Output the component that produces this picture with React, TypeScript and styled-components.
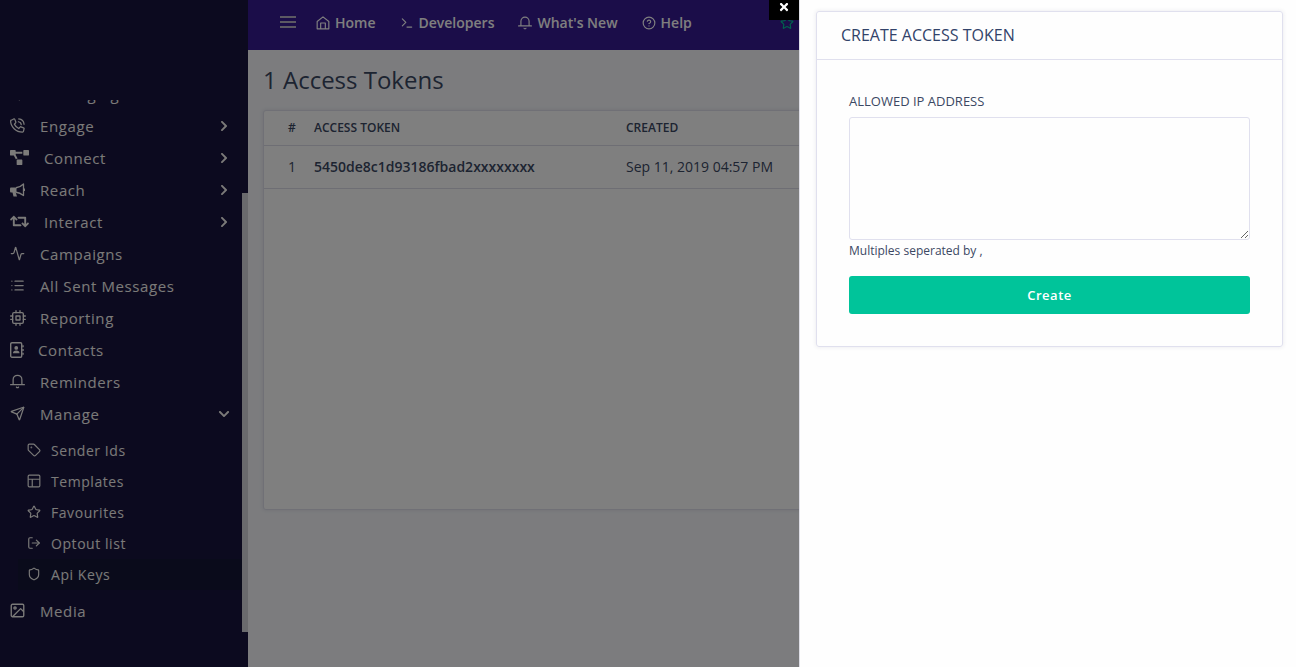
import React from "react";
import styled, { createGlobalStyle, css } from "styled-components";
import {
  Activity, CircleHelp, List, LogOut, Send, Shield, Star, Tag, Terminal,
} from "lucide-react";
import { FaChevronDown, FaChevronRight, FaProjectDiagram, FaRetweet, FaTimes } from "react-icons/fa";

const GlobalStyle = createGlobalStyle`
  *, *::before, *::after { box-sizing: border-box; }
  body {
    margin: 0;
    background: #f8f9fd;
    color: #3b4863;
    font-family: "Open Sans", sans-serif;
    font-size: 14px;
    overflow: hidden;
  }
  a { color: inherit; text-decoration: none; }
  button { font-family: inherit; cursor: pointer; }
`;

const Page = styled.div`
  display: flex;
  min-height: 100vh;
`;

const Sidebar = styled.aside`
  position: relative;
  flex: 0 0 248px;
  height: 100vh;
  padding: 100px 6px 0 0;
  background: #19143e;
`;

const SidebarView = styled.nav`
  height: 100%;
  overflow: hidden;
`;

const Menu = styled.ul`
  margin: -22px 0 0;
  padding: 0;
  list-style: none;
`;

const ScrollThumb = styled.span`
  position: absolute;
  right: 0;
  top: 193px;
  width: 6px;
  height: 439px;
  background: #d4d4da;
`;

const MenuLink = styled.a`
  display: flex;
  align-items: center;
  height: 32px;
  padding: 0 12px 0 10px;
  color: #f6f5f2;
  font-size: 15px;
  letter-spacing: 0.04em;
`;

const MenuIcon = styled.span<{ $space: number }>`
  display: flex;
  flex: none;
  width: ${({ $space }) => $space}px;
  padding-bottom: 1px;
`;

const Caret = styled.span`
  display: flex;
  margin-left: auto;
  padding-bottom: 1px;
`;

const SubMenu = styled.ul`
  margin: 0;
  padding: 5px 0 5px 18px;
  list-style: none;
`;

const SubLink = styled.a<{ $active?: boolean }>`
  display: flex;
  align-items: center;
  gap: 10px;
  height: 31px;
  padding-left: 9px;
  color: #f6f5f2;
  font-size: 14px;
  letter-spacing: 0.04em;
  ${({ $active }) => $active && css`background: #141736;`}
  svg { margin-bottom: 2px; }
`;

const Main = styled.main`
  flex: 1;
  min-width: 0;
`;

const TopBar = styled.header`
  display: flex;
  align-items: center;
  height: 50px;
  padding: 0 32px 6px;
  background: #361a92;
  color: #fff;
`;

const MenuToggle = styled.button`
  display: flex;
  margin-right: 20px;
  padding: 0;
  border: 0;
  background: none;
  color: #b9b3c6;
`;

const TopNav = styled.nav`
  display: flex;
  gap: 24px;
`;

const TopLink = styled.a`
  display: flex;
  align-items: center;
  gap: 5px;
  font-weight: 600;
  white-space: nowrap;
  svg { margin-top: 2px; }
`;

const Credits = styled(TopLink)`
  margin-left: 88px;
  color: #00c49a;
`;

const Content = styled.div`
  padding: 12px 15px;
`;

const Heading = styled.h1`
  margin: 0 0 12px;
  font-size: 24px;
  font-weight: 400;
  line-height: 36px;
`;

const TableCard = styled.section`
  min-height: 400px;
  border: 1px solid #e0e0ec;
  border-radius: 3px;
  background: #fff;
  box-shadow: 0 0 4px rgba(40, 40, 80, 0.12);
`;

const TokenTable = styled.table`
  width: 100%;
  border-spacing: 0;
  table-layout: fixed;
  text-align: left;
  th, td {
    padding: 0 12px 2px;
    border-bottom: 1px solid #dcdce8;
  }
  th { height: 35px; font-size: 12px; font-weight: 600; }
  td { height: 43px; font-size: 14px; }
  td strong { font-weight: 600; }
  th:first-child, td:first-child { width: 38px; padding: 0 0 2px 24px; }
  th:nth-child(2) { width: 312px; }
`;

const Backdrop = styled.div`
  position: fixed;
  inset: 0;
  background: rgba(0, 0, 0, 0.5);
`;

const Drawer = styled.aside`
  position: fixed;
  top: 0;
  right: 0;
  bottom: 0;
  width: 497px;
  padding: 11px 13px 0 17px;
  background: #fefefe;
  box-shadow: inset 1px 0 #dedee6;
`;

const CloseButton = styled.button`
  position: absolute;
  top: 0;
  right: 100%;
  display: flex;
  justify-content: center;
  width: 30px;
  height: 20px;
  padding: 1px 0 0;
  border: 0;
  background: #000;
  color: #fff;
`;

const FormCard = styled.form`
  border: 1px solid #e0e0ee;
  border-radius: 3px;
  box-shadow: 0 0 4px rgba(40, 40, 80, 0.1);
`;

const FormTitle = styled.h2`
  margin: 0;
  padding: 0 24px;
  border-bottom: 1px solid #e0e0ee;
  color: #32436a;
  font-size: 16px;
  font-weight: 400;
  line-height: 47px;
`;

const FormBody = styled.div`
  display: flex;
  flex-direction: column;
  padding: 32px;
`;

const Label = styled.label`
  margin-bottom: 6px;
  font-size: 13px;
  line-height: 19px;
`;

const TextBox = styled.textarea`
  width: 100%;
  height: 123px;
  padding: 8px;
  border: 1px solid #e0e0ee;
  border-radius: 3px;
  background: #fefefe;
  font: inherit;
  resize: vertical;
`;

const Hint = styled.small`
  margin-bottom: 14px;
  font-size: 12px;
  line-height: 22px;
`;

const Submit = styled.button`
  height: 38px;
  border: 0;
  border-radius: 3px;
  background: #00c49a;
  color: #fff;
  font-size: 13px;
  font-weight: 600;
  letter-spacing: 0.04em;
`;

const PhoneIcon = () => (
  <svg width="15" height="15" viewBox="0 0 24 24" fill="none" stroke="currentColor" strokeWidth="2" strokeLinejoin="round" strokeLinecap="round">
    <path d="M2 3.5 6 1.5c.8-.3 1.400 0 1.700.7l1.600 4.200c.2.600.1 1-.4 1.500L7 9.800c1.400 3 4 5.600 7 7l2-2.300c.4-.5.900-.6 1.500-.4l4.200 1.800c.8.300 1 .9.800 1.600l-1 4c-.2.800-.7 1-1.400 1C9.500 22.500 1 14 1 4.900c0-.7.300-1.100 1-1.400z" />
    <path d="M13.500 6c2.500.4 4.200 2 4.500 4.500M14 1.500c5 .5 8 3.600 8.500 8.500" />
  </svg>
);

const HornIcon = () => (
  <svg width="15" height="14" viewBox="0 0 30 28" fill="none" stroke="currentColor" strokeWidth="2.600" strokeLinejoin="round">
    <path d="M2 9h11v10h-1.500l2.500 8H7l-2-8H2c-3 0-3-10 0-10z" fill="currentColor" stroke="none" />
    <path d="M12 9.500C18 9 22 7 27 2v23c-5-4-9-6-15-6.500" />
    <path d="M29 11v5" />
  </svg>
);

const AddressBookIcon = () => (
  <svg width="14" height="16" viewBox="0 0 28 32" fill="none" stroke="currentColor" strokeWidth="2.800">
    <rect x="1.400" y="1.400" width="22" height="29" rx="2.500" />
    <circle cx="12.500" cy="11.800" r="3.800" fill="currentColor" stroke="none" />
    <path d="M6 22.500c0-4 2-5.500 6.500-5.500s6.500 1.500 6.500 5.500z" fill="currentColor" stroke="none" />
    <path d="M26 6.500v4M26 14v4M26 21.500v4" />
  </svg>
);

const BarsIcon = () => (
  <svg width="16" height="12" viewBox="0 0 16 12" fill="currentColor">
    <path d="M0 0h16v2H0zM0 5h16v2H0zM0 10h16v2H0z" />
  </svg>
);

const LayoutIcon = () => (
  <svg width="14" height="14" viewBox="0 0 24 24" fill="none" stroke="currentColor" strokeWidth="2">
    <rect x="2" y="2" width="20" height="20" rx="2" />
    <path d="M2 9h20M9 9v13" />
  </svg>
);

const CpuIcon = () => (
  <svg width="16" height="16" viewBox="0 0 24 24" fill="none" stroke="currentColor" strokeWidth="2" strokeLinecap="round" strokeLinejoin="round">
    <rect x="4" y="4" width="16" height="16" rx="2" />
    <path d="M9 9h6v6H9zM9 1v3M15 1v3M9 20v3M15 20v3M20 9h3M20 14h3M1 9h3M1 14h3" />
  </svg>
);

const PictureIcon = () => (
  <svg width="15" height="15" viewBox="0 0 24 24" fill="none" stroke="currentColor" strokeWidth="2.200" strokeLinejoin="round">
    <rect x="2" y="2" width="20" height="20" rx="2" />
    <circle cx="8" cy="8" r="1.800" />
    <path d="M22 14l-5-5L4 22" />
  </svg>
);

const BellIcon = ({ size }: { size: number }) => (
  <svg width={size} height={size} viewBox="0 0 24 24" fill="none" stroke="currentColor" strokeWidth="2" strokeLinecap="round" strokeLinejoin="round">
    <path d="M19 17V9A7 7 0 0 0 5 9v8M1 17h22M10.300 21a2 2 0 0 0 3.400 0" />
  </svg>
);

const HomeIcon = () => (
  <svg width="14" height="14" viewBox="0 0 24 24" fill="none" stroke="currentColor" strokeWidth="2" strokeLinecap="round" strokeLinejoin="round">
    <path d="M2 9.500 12 1.500l10 8V22H2zM8 22V12h8v10" />
  </svg>
);

const line = { size: 15, strokeWidth: 2 };
const small = { size: 14, strokeWidth: 2 };

type Item = { label: string; icon: React.ReactNode; space?: number; caret?: "right" | "down" };

const items: Item[] = [
  { label: "Messaging", icon: <Send {...line} />, caret: "right" },
  { label: "Engage", icon: <PhoneIcon />, caret: "right" },
  { label: "Connect", icon: <FaProjectDiagram size={19} />, space: 34, caret: "right" },
  { label: "Reach", icon: <HornIcon />, caret: "right" },
  { label: "Interact", icon: <FaRetweet size={19} />, space: 34, caret: "right" },
  { label: "Campaigns", icon: <Activity {...line} /> },
  { label: "All Sent Messages", icon: <List {...line} /> },
  { label: "Reporting", icon: <CpuIcon /> },
  { label: "Contacts", icon: <AddressBookIcon />, space: 28 },
  { label: "Reminders", icon: <BellIcon size={15} /> },
  { label: "Manage", icon: <Send {...line} />, caret: "down" },
];

const subItems = [
  { label: "Sender Ids", icon: <Tag {...small} /> },
  { label: "Templates", icon: <LayoutIcon /> },
  { label: "Favourites", icon: <Star {...small} /> },
  { label: "Optout list", icon: <LogOut {...small} /> },
  { label: "Api Keys", icon: <Shield {...small} />, active: true },
];

const MenuItem = ({ label, icon, space = 30, caret }: Item) => (
  <MenuLink href="#">
    <MenuIcon $space={space}>{icon}</MenuIcon>
    {label}
    {caret && <Caret>{caret === "right" ? <FaChevronRight size={12} /> : <FaChevronDown size={12} />}</Caret>}
  </MenuLink>
);

export default function App() {
  return (
    <>
      <GlobalStyle />
      <Page>
        <Sidebar>
          <SidebarView aria-label="Main">
            <Menu>
              {items.map((item) => (
                <li key={item.label}>
                  <MenuItem {...item} />
                  {item.caret === "down" && (
                    <SubMenu>
                      {subItems.map((sub) => (
                        <li key={sub.label}>
                          <SubLink href="#" $active={sub.active}>{sub.icon}{sub.label}</SubLink>
                        </li>
                      ))}
                    </SubMenu>
                  )}
                </li>
              ))}
              <li><MenuItem label="Media" icon={<PictureIcon />} /></li>
            </Menu>
          </SidebarView>
          <ScrollThumb />
        </Sidebar>
        <Main>
          <TopBar>
            <MenuToggle type="button" aria-label="Toggle menu"><BarsIcon /></MenuToggle>
            <TopNav aria-label="Top">
              <TopLink href="#"><HomeIcon />Home</TopLink>
              <TopLink href="#"><Terminal {...small} />Developers</TopLink>
              <TopLink href="#"><BellIcon size={14} />What's New</TopLink>
              <TopLink href="#"><CircleHelp {...small} />Help</TopLink>
            </TopNav>
            <Credits href="#"><Star {...small} />2</Credits>
          </TopBar>
          <Content>
            <Heading>1 Access Tokens</Heading>
            <TableCard>
              <TokenTable>
                <thead>
                  <tr><th>#</th><th>ACCESS TOKEN</th><th>CREATED</th></tr>
                </thead>
                <tbody>
                  <tr>
                    <td>1</td>
                    <td><strong>5450de8c1d93186fbad2xxxxxxxx</strong></td>
                    <td>Sep 11, 2019 04:57 PM</td>
                  </tr>
                </tbody>
              </TokenTable>
            </TableCard>
          </Content>
        </Main>
      </Page>
      <Backdrop />
      <Drawer>
        <CloseButton type="button" aria-label="Close"><FaTimes size={12} /></CloseButton>
        <FormCard>
          <FormTitle>CREATE ACCESS TOKEN</FormTitle>
          <FormBody>
            <Label htmlFor="allowed-ip">ALLOWED IP ADDRESS</Label>
            <TextBox id="allowed-ip" />
            <Hint>Multiples seperated by ,</Hint>
            <Submit type="submit">Create</Submit>
          </FormBody>
        </FormCard>
      </Drawer>
    </>
  );
}
